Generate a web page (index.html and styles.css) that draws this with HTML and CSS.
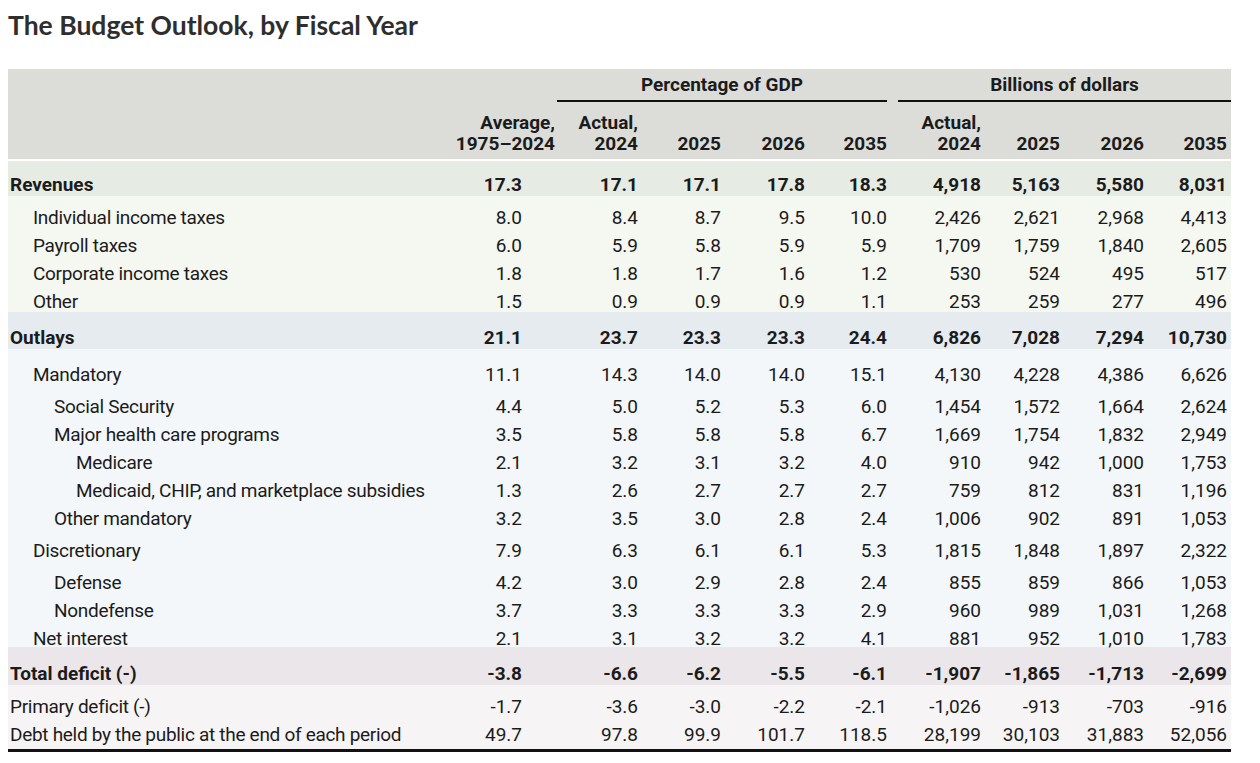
FILE: index.html
```html
<!DOCTYPE html>
<html lang="en">
<head>
<meta charset="utf-8">
<title>The Budget Outlook, by Fiscal Year</title>
<link rel="stylesheet" href="styles.css">
</head>
<body>
<h1 class="title">The Budget Outlook, by Fiscal Year</h1>
<div class="table">
  <div class="thead">
    <div class="row grp-row">
      <div class="grp grp-pct"><span>Percentage of GDP</span></div>
      <div class="grp grp-bil"><span>Billions of dollars</span></div>
    </div>
    <div class="row col-row">
      <div class="c lbl"></div>
      <div class="c avg-h">Average,<br>1975–2024</div>
      <div class="c">Actual,<br>2024</div>
      <div class="c">2025</div>
      <div class="c">2026</div>
      <div class="c">2035</div>
      <div class="c">Actual,<br>2024</div>
      <div class="c">2025</div>
      <div class="c">2026</div>
      <div class="c last">2035</div>
    </div>
  </div>

  <section class="group rev">
    <div class="row total first-total">
      <div class="c lbl l0">Revenues</div><div class="c avg">17.3</div><div class="c">17.1</div><div class="c">17.1</div><div class="c">17.8</div><div class="c">18.3</div><div class="c">4,918</div><div class="c">5,163</div><div class="c">5,580</div><div class="c last">8,031</div>
    </div>
    <div class="sub">
      <div class="row"><div class="c lbl l1">Individual income taxes</div><div class="c avg">8.0</div><div class="c">8.4</div><div class="c">8.7</div><div class="c">9.5</div><div class="c">10.0</div><div class="c">2,426</div><div class="c">2,621</div><div class="c">2,968</div><div class="c last">4,413</div></div>
      <div class="row"><div class="c lbl l1">Payroll taxes</div><div class="c avg">6.0</div><div class="c">5.9</div><div class="c">5.8</div><div class="c">5.9</div><div class="c">5.9</div><div class="c">1,709</div><div class="c">1,759</div><div class="c">1,840</div><div class="c last">2,605</div></div>
      <div class="row"><div class="c lbl l1">Corporate income taxes</div><div class="c avg">1.8</div><div class="c">1.8</div><div class="c">1.7</div><div class="c">1.6</div><div class="c">1.2</div><div class="c">530</div><div class="c">524</div><div class="c">495</div><div class="c last">517</div></div>
      <div class="row"><div class="c lbl l1">Other</div><div class="c avg">1.5</div><div class="c">0.9</div><div class="c">0.9</div><div class="c">0.9</div><div class="c">1.1</div><div class="c">253</div><div class="c">259</div><div class="c">277</div><div class="c last">496</div></div>
    </div>
  </section>

  <section class="group out">
    <div class="row total">
      <div class="c lbl l0">Outlays</div><div class="c avg">21.1</div><div class="c">23.7</div><div class="c">23.3</div><div class="c">23.3</div><div class="c">24.4</div><div class="c">6,826</div><div class="c">7,028</div><div class="c">7,294</div><div class="c last">10,730</div>
    </div>
    <div class="sub">
      <div class="row padded"><div class="c lbl l1">Mandatory</div><div class="c avg">11.1</div><div class="c">14.3</div><div class="c">14.0</div><div class="c">14.0</div><div class="c">15.1</div><div class="c">4,130</div><div class="c">4,228</div><div class="c">4,386</div><div class="c last">6,626</div></div>
      <div class="row"><div class="c lbl l2">Social Security</div><div class="c avg">4.4</div><div class="c">5.0</div><div class="c">5.2</div><div class="c">5.3</div><div class="c">6.0</div><div class="c">1,454</div><div class="c">1,572</div><div class="c">1,664</div><div class="c last">2,624</div></div>
      <div class="row"><div class="c lbl l2">Major health care programs</div><div class="c avg">3.5</div><div class="c">5.8</div><div class="c">5.8</div><div class="c">5.8</div><div class="c">6.7</div><div class="c">1,669</div><div class="c">1,754</div><div class="c">1,832</div><div class="c last">2,949</div></div>
      <div class="row"><div class="c lbl l3">Medicare</div><div class="c avg">2.1</div><div class="c">3.2</div><div class="c">3.1</div><div class="c">3.2</div><div class="c">4.0</div><div class="c">910</div><div class="c">942</div><div class="c">1,000</div><div class="c last">1,753</div></div>
      <div class="row"><div class="c lbl l3">Medicaid, CHIP, and marketplace subsidies</div><div class="c avg">1.3</div><div class="c">2.6</div><div class="c">2.7</div><div class="c">2.7</div><div class="c">2.7</div><div class="c">759</div><div class="c">812</div><div class="c">831</div><div class="c last">1,196</div></div>
      <div class="row"><div class="c lbl l2">Other mandatory</div><div class="c avg">3.2</div><div class="c">3.5</div><div class="c">3.0</div><div class="c">2.8</div><div class="c">2.4</div><div class="c">1,006</div><div class="c">902</div><div class="c">891</div><div class="c last">1,053</div></div>
      <div class="row padded"><div class="c lbl l1">Discretionary</div><div class="c avg">7.9</div><div class="c">6.3</div><div class="c">6.1</div><div class="c">6.1</div><div class="c">5.3</div><div class="c">1,815</div><div class="c">1,848</div><div class="c">1,897</div><div class="c last">2,322</div></div>
      <div class="row"><div class="c lbl l2">Defense</div><div class="c avg">4.2</div><div class="c">3.0</div><div class="c">2.9</div><div class="c">2.8</div><div class="c">2.4</div><div class="c">855</div><div class="c">859</div><div class="c">866</div><div class="c last">1,053</div></div>
      <div class="row"><div class="c lbl l2">Nondefense</div><div class="c avg">3.7</div><div class="c">3.3</div><div class="c">3.3</div><div class="c">3.3</div><div class="c">2.9</div><div class="c">960</div><div class="c">989</div><div class="c">1,031</div><div class="c last">1,268</div></div>
      <div class="row"><div class="c lbl l1">Net interest</div><div class="c avg">2.1</div><div class="c">3.1</div><div class="c">3.2</div><div class="c">3.2</div><div class="c">4.1</div><div class="c">881</div><div class="c">952</div><div class="c">1,010</div><div class="c last">1,783</div></div>
    </div>
  </section>

  <section class="group def">
    <div class="row total">
      <div class="c lbl l0">Total deficit (-)</div><div class="c avg">-3.8</div><div class="c">-6.6</div><div class="c">-6.2</div><div class="c">-5.5</div><div class="c">-6.1</div><div class="c">-1,907</div><div class="c">-1,865</div><div class="c">-1,713</div><div class="c last">-2,699</div>
    </div>
    <div class="sub">
      <div class="row"><div class="c lbl l0">Primary deficit (-)</div><div class="c avg">-1.7</div><div class="c">-3.6</div><div class="c">-3.0</div><div class="c">-2.2</div><div class="c">-2.1</div><div class="c">-1,026</div><div class="c">-913</div><div class="c">-703</div><div class="c last">-916</div></div>
      <div class="row"><div class="c lbl l0">Debt held by the public at the end of each period</div><div class="c avg">49.7</div><div class="c">97.8</div><div class="c">99.9</div><div class="c">101.7</div><div class="c">118.5</div><div class="c">28,199</div><div class="c">30,103</div><div class="c">31,883</div><div class="c last">52,056</div></div>
    </div>
  </section>
</div>
</body>
</html>
```

FILE: styles.css
```css
* { box-sizing: border-box; }

body {
  margin: 0;
  background: #ffffff;
  font-family: Roboto, "Liberation Sans", sans-serif;
  color: #1b1b1b;
}

.title {
  margin: 10px 0 0 8px;
  font-family: Lato, "Liberation Sans", sans-serif;
  font-weight: 700;
  font-size: 26.5px;
  line-height: 30px;
  color: #2e2e2e;
}

.table {
  margin: 29px 0 0 8px;
  width: 1223px;
  font-size: 19px;
}

.row {
  display: grid;
  grid-template-columns: 447px 103px 83px 83px 84px 82px 94px 79px 84px 84px;
  align-items: end;
  height: 28px;
  line-height: 16px;
}

.c {
  text-align: right;
  padding-right: 3px;
  white-space: nowrap;
}
.c.last { padding-right: 4px; }
.c.avg { padding-right: 36px; }
.c.lbl { text-align: left; padding-right: 0; letter-spacing: -0.3px; }

.l0 { padding-left: 2px; }
.l1 { padding-left: 25px; }
.l2 { padding-left: 46px; }
.l3 { padding-left: 68px; }

/* header */
.thead {
  background: #dcddd8;
  font-weight: 700;
}
.grp-row {
  height: 33px;
  align-items: stretch;
  line-height: 22px;
}
.grp {
  display: flex;
  align-items: stretch;
}
.grp span {
  flex: 1;
  text-align: center;
  border-bottom: 2px solid #111;
  padding-top: 5px;
}
.grp-pct { grid-column: 3 / 7; margin-left: -1px; margin-right: 3px; }
.grp-bil { grid-column: 7 / 11; margin-left: 8px; }

.col-row {
  height: 57px;
  line-height: 21px;
  padding-bottom: 5px;
}

/* body groups */
.total {
  height: 37px;
  line-height: 22px;
  font-weight: 700;
}
.total .c.lbl { letter-spacing: 0; }
.first-total {
  border-top: 2px solid #ffffff;
}
.sub {
  padding-top: 2px;
}
.row.padded {
  height: 36px;
  padding-bottom: 4px;
}

.rev .total { background: #e6ebe3; }
.rev .sub { background: #f5f7f1; padding-bottom: 2px; }
.out .total { background: #e5ebef; }
.out .sub { background: #f3f7f9; }
.def .total { background: #ebe6e9; height: 38px; }
.def .sub { background: #f7f4f5; padding-bottom: 6px; border-bottom: 3px solid #111; }
```
